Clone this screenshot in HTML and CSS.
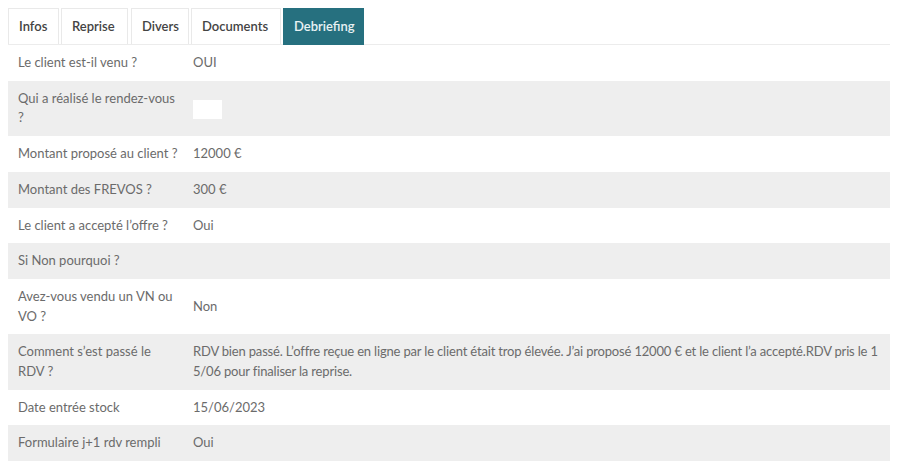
FILE: index.html
```html
<!DOCTYPE html>
<html lang="fr">
<head>
<meta charset="utf-8">
<title>Debriefing</title>
<link rel="stylesheet" href="styles.css">
</head>
<body>
<div class="panel">
  <ul class="tabs">
    <li class="tab">Infos</li>
    <li class="tab">Reprise</li>
    <li class="tab">Divers</li>
    <li class="tab">Documents</li>
    <li class="tab active">Debriefing</li>
  </ul>
  <table class="details">
    <colgroup>
      <col class="col-label">
      <col class="col-value">
    </colgroup>
    <tbody>
      <tr><td class="label">Le client est-il venu ?</td><td class="value">OUI</td></tr>
      <tr><td class="label">Qui a réalisé le rendez-vous ?</td><td class="value"><span class="empty-box"></span></td></tr>
      <tr><td class="label">Montant proposé au client ?</td><td class="value">12000 €</td></tr>
      <tr><td class="label">Montant des FREVOS ?</td><td class="value">300 €</td></tr>
      <tr><td class="label">Le client a accepté l’offre ?</td><td class="value">Oui</td></tr>
      <tr><td class="label">Si Non pourquoi ?</td><td class="value"></td></tr>
      <tr><td class="label">Avez-vous vendu un VN ou VO ?</td><td class="value">Non</td></tr>
      <tr><td class="label">Comment s’est passé le RDV ?</td><td class="value long">RDV bien passé. L’offre reçue en ligne par le client était trop élevée. J’ai proposé 12000 € et le client l’a accepté.RDV pris le 15/06 pour finaliser la reprise.</td></tr>
      <tr><td class="label">Date entrée stock</td><td class="value">15/06/2023</td></tr>
      <tr><td class="label">Formulaire j+1 rdv rempli</td><td class="value">Oui</td></tr>
    </tbody>
  </table>
</div>
</body>
</html>
```

FILE: styles.css
```css
html, body {
  margin: 0;
  padding: 0;
  background: #ffffff;
}

body {
  padding: 8px;
  font-family: Lato, "Open Sans", "Liberation Sans", sans-serif;
  font-size: 13px;
  color: #6b6b6b;
}

.panel {
  width: 882px;
}

.tabs {
  display: flex;
  list-style: none;
  margin: 0;
  padding: 0;
  border-bottom: 1px solid #ececec;
}

.tab {
  box-sizing: border-box;
  height: 36px;
  line-height: 34px;
  padding: 0 10px;
  margin-right: 2px;
  margin-bottom: -1px;
  border: 1px solid #e9e9e9;
  border-bottom: none;
  color: #444444;
  font-weight: 600;
  font-size: 13px;
}

.tab:nth-child(1) { width: 51px; }
.tab:nth-child(2) { width: 67px; margin-right: 3px; }
.tab:nth-child(3) { width: 58px; }
.tab:nth-child(4) { width: 90px; margin-right: 2px; }
.tab:nth-child(5) { width: 81px; }

.tab.active {
  background: #26707f;
  border-color: #26707f;
  color: #e9f2f4;
  height: 37px;
}

.details {
  width: 100%;
  border-collapse: collapse;
  table-layout: fixed;
}

.col-label {
  width: 175px;
}

.details tr:nth-child(even) {
  background: #eeeeee;
}

.details td {
  padding: 8px 10px;
  line-height: 19.7px;
  vertical-align: middle;
}

.details td.label {
  padding-right: 3px;
}

.value.long {
  word-break: break-all;
  letter-spacing: -0.17px;
}

.empty-box {
  display: inline-block;
  width: 29px;
  height: 19px;
  background: #ffffff;
  vertical-align: middle;
}
```
